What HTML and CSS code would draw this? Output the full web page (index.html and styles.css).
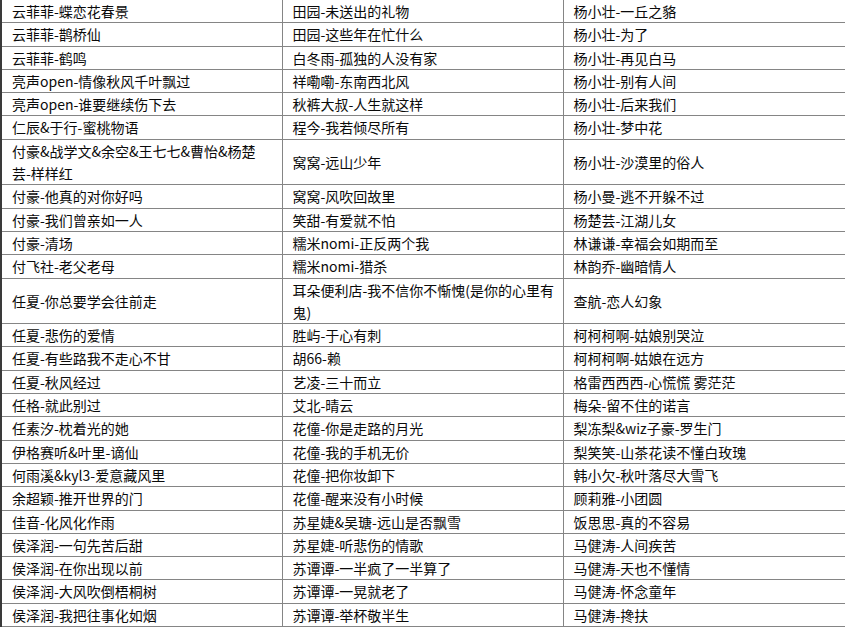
FILE: index.html
```html
<!DOCTYPE html>
<html lang="zh-CN">
<head>
<meta charset="utf-8">
<title>歌曲列表</title>
<link rel="stylesheet" href="styles.css">
</head>
<body>
<table class="songs">
<colgroup><col class="c1"><col class="c2"><col class="c3"></colgroup>
<tbody>
<tr><td>云菲菲-蝶恋花春景</td><td>田园-未送出的礼物</td><td>杨小壮-一丘之貉</td></tr>
<tr><td>云菲菲-鹊桥仙</td><td>田园-这些年在忙什么</td><td>杨小壮-为了</td></tr>
<tr><td>云菲菲-鹤鸣</td><td>白冬雨-孤独的人没有家</td><td>杨小壮-再见白马</td></tr>
<tr><td>亮声open-情像秋风千叶飘过</td><td>祥嘞嘞-东南西北风</td><td>杨小壮-别有人间</td></tr>
<tr><td>亮声open-谁要继续伤下去</td><td>秋裤大叔-人生就这样</td><td>杨小壮-后来我们</td></tr>
<tr><td>仁辰&amp;于行-蜜桃物语</td><td>程今-我若倾尽所有</td><td>杨小壮-梦中花</td></tr>
<tr><td>付豪&amp;战学文&amp;余空&amp;王七七&amp;曹怡&amp;杨楚芸-样样红</td><td>窝窝-远山少年</td><td>杨小壮-沙漠里的俗人</td></tr>
<tr><td>付豪-他真的对你好吗</td><td>窝窝-风吹回故里</td><td>杨小曼-逃不开躲不过</td></tr>
<tr><td>付豪-我们曾亲如一人</td><td>笑甜-有爱就不怕</td><td>杨楚芸-江湖儿女</td></tr>
<tr><td>付豪-清场</td><td>糯米nomi-正反两个我</td><td>林谦谦-幸福会如期而至</td></tr>
<tr><td>付飞社-老父老母</td><td>糯米nomi-猎杀</td><td>林韵乔-幽暗情人</td></tr>
<tr><td>任夏-你总要学会往前走</td><td>耳朵便利店-我不信你不惭愧(是你的心里有鬼)</td><td>查航-恋人幻象</td></tr>
<tr><td>任夏-悲伤的爱情</td><td>胜屿-于心有刺</td><td>柯柯柯啊-姑娘别哭泣</td></tr>
<tr><td>任夏-有些路我不走心不甘</td><td>胡66-赖</td><td>柯柯柯啊-姑娘在远方</td></tr>
<tr><td>任夏-秋风经过</td><td>艺凌-三十而立</td><td>格雷西西西-心慌慌 雾茫茫</td></tr>
<tr><td>任格-就此别过</td><td>艾北-晴云</td><td>梅朵-留不住的诺言</td></tr>
<tr><td>任素汐-枕着光的她</td><td>花僮-你是走路的月光</td><td>梨冻梨&amp;wiz子豪-罗生门</td></tr>
<tr><td>伊格赛听&amp;叶里-谪仙</td><td>花僮-我的手机无价</td><td>梨笑笑-山茶花读不懂白玫瑰</td></tr>
<tr><td>何雨溪&amp;kyl3-爱意藏风里</td><td>花僮-把你妆卸下</td><td>韩小欠-秋叶落尽大雪飞</td></tr>
<tr><td>余超颖-推开世界的门</td><td>花僮-醒来没有小时候</td><td>顾莉雅-小团圆</td></tr>
<tr><td>佳音-化风化作雨</td><td>苏星婕&amp;吴瑭-远山是否飘雪</td><td>饭思思-真的不容易</td></tr>
<tr><td>侯泽润-一句先苦后甜</td><td>苏星婕-听悲伤的情歌</td><td>马健涛-人间疾苦</td></tr>
<tr><td>侯泽润-在你出现以前</td><td>苏谭谭-一半疯了一半算了</td><td>马健涛-天也不懂情</td></tr>
<tr><td>侯泽润-大风吹倒梧桐树</td><td>苏谭谭-一晃就老了</td><td>马健涛-怀念童年</td></tr>
<tr><td>侯泽润-我把往事化如烟</td><td>苏谭谭-举杯敬半生</td><td>马健涛-搀扶</td></tr>
</tbody>
</table>
</body>
</html>
```
FILE: styles.css
```css
html, body {
  margin: 0;
  padding: 0;
  background: #ffffff;
  overflow: hidden;
}
.songs {
  width: 845px;
  margin-top: -1px;
  border-collapse: collapse;
  table-layout: fixed;
  border-left: 2px solid #3a3a3a;
  border-right: 3px solid #2a2a2a;
  font-family: "Noto Sans CJK SC", "Microsoft YaHei", sans-serif;
  font-size: 14px;
  color: #0a0a0a;
}
.c1 { width: 281px; }
.c2 { width: 281px; }
.c3 { width: 283px; }
.songs td {
  border: 1px solid #858585;
  padding: 0 10px;
  line-height: 22.3px;
  vertical-align: middle;
  word-break: break-all;
}
.songs tr td:nth-child(2) { padding-right: 3px; }
.songs tr td:first-child { border-left: 2px solid #3a3a3a; }
.songs tr td:last-child { border-right: 3px solid #2a2a2a; }
```
